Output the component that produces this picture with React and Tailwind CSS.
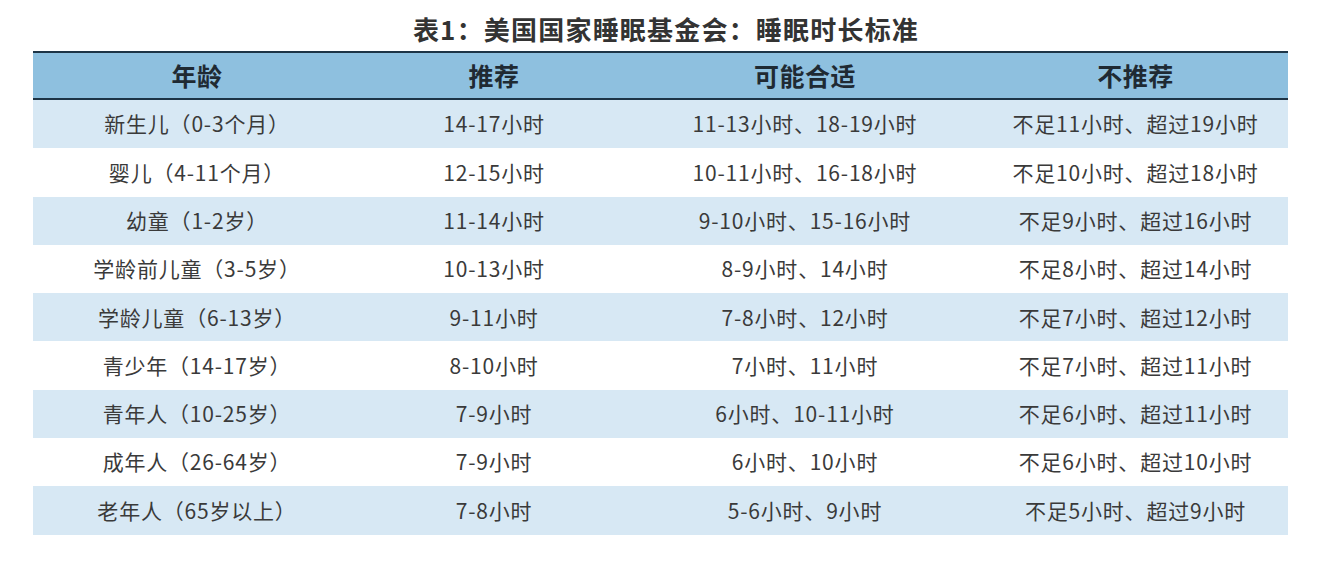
import React from 'react';

const rows = [
    ['新生儿（0-3个月）', '14-17小时', '11-13小时、18-19小时', '不足11小时、超过19小时'],
    ['婴儿（4-11个月）', '12-15小时', '10-11小时、16-18小时', '不足10小时、超过18小时'],
    ['幼童（1-2岁）', '11-14小时', '9-10小时、15-16小时', '不足9小时、超过16小时'],
    ['学龄前儿童（3-5岁）', '10-13小时', '8-9小时、14小时', '不足8小时、超过14小时'],
    ['学龄儿童（6-13岁）', '9-11小时', '7-8小时、12小时', '不足7小时、超过12小时'],
    ['青少年（14-17岁）', '8-10小时', '7小时、11小时', '不足7小时、超过11小时'],
    ['青年人（10-25岁）', '7-9小时', '6小时、10-11小时', '不足6小时、超过11小时'],
    ['成年人（26-64岁）', '7-9小时', '6小时、10小时', '不足6小时、超过10小时'],
    ['老年人（65岁以上）', '7-8小时', '5-6小时、9小时', '不足5小时、超过9小时'],
];

const headers = ['年龄', '推荐', '可能合适', '不推荐'];

// column widths taken from the screenshot
const cols = 'grid grid-cols-[328px_266px_356px_305px]';

const App = () => {
    return (
        <div className="min-h-screen bg-white font-['Noto_Sans_CJK_SC','Noto_Sans',sans-serif] text-[#3a3a3a]">
            {/* title */}
            <div className="h-[51px] flex items-center justify-center pt-[7px]">
                <h1 className="text-[26px] font-bold text-[#333] leading-none tracking-[1.2px]">表1：美国国家睡眠基金会：睡眠时长标准</h1>
            </div>

            {/* table */}
            <div className="ml-[33px] w-[1255px]">
                <div className={`${cols} h-[49px] bg-[#8ec0df] border-y-2 border-[#1d3446]`}>
                    {headers.map((h) => (
                        <div key={h} className="flex items-center justify-center text-[25px] font-bold text-[#1f2a33] tracking-[0.5px]">
                            {h}
                        </div>
                    ))}
                </div>

                {rows.map((r, i) => (
                    <div key={i} className={`${cols} h-[48.3px] ${i % 2 === 0 ? 'bg-[#d7e8f4]' : 'bg-white'}`}>
                        {r.map((c, j) => (
                            <div key={j} className="flex items-center justify-center text-[21px] tracking-[0.8px]">
                                {c}
                            </div>
                        ))}
                    </div>
                ))}
            </div>
        </div>
    );
};

export default App;
